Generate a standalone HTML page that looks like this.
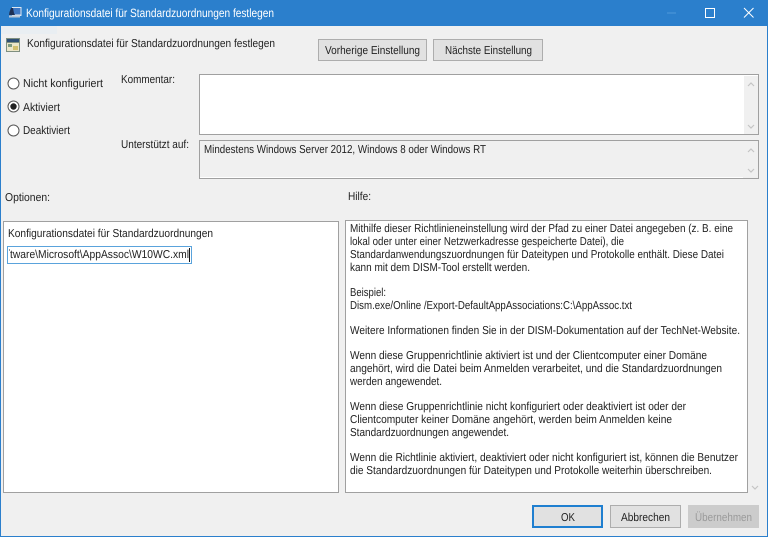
<!DOCTYPE html>
<html lang="de">
<head>
<meta charset="utf-8">
<title>Konfigurationsdatei für Standardzuordnungen festlegen</title>
<style>
html,body{margin:0;padding:0;width:768px;height:537px;overflow:hidden;background:#f0f0f0}
svg{display:block;position:absolute;left:0;top:0;filter:blur(.35px)}
text{font-family:"Liberation Sans",sans-serif;font-size:11.5px;fill:#222;text-rendering:geometricPrecision}
.t{fill:#fff;font-size:12px}
</style>
</head>
<body>
<svg width="768" height="537" viewBox="0 0 768 537" xmlns="http://www.w3.org/2000/svg">
<!-- window -->
<rect x="0" y="0" width="768" height="537" fill="#2b7fcc"/>
<rect x="1" y="26" width="766" height="510" fill="#f0f0f0"/>
<rect x="1" y="26" width="56" height="8" fill="#e9eef2"/>

<!-- title icon -->
<rect x="12" y="7" width="9.500" height="9" fill="#dfe8f2"/>
<rect x="13" y="8" width="7.500" height="6.500" fill="#3f78c4"/>
<path d="M11 8 L13 8 L14 13 L15 15 L9 15 L9.500 12 Z" fill="#1d2f55"/>
<rect x="9" y="15.500" width="11" height="2" fill="#b9c6d6"/>
<text class="t" x="26" y="17" textLength="248" lengthAdjust="spacingAndGlyphs">Konfigurationsdatei für Standardzuordnungen festlegen</text>

<!-- window controls -->
<rect x="667" y="12.500" width="9" height="1" fill="#4f98da"/>
<rect x="705.500" y="8.500" width="9" height="9" fill="none" stroke="#fff"/>
<path d="M744 8 L753.500 17.500 M753.500 8 L744 17.500" stroke="#fff" stroke-width="1" fill="none"/>

<!-- header -->
<rect x="6" y="38" width="14" height="14" fill="#7f8f80"/>
<rect x="7" y="39" width="12" height="3" fill="#2f4f73"/>
<rect x="7" y="43" width="12" height="8" fill="#ece6c8"/>
<rect x="8" y="44" width="4" height="3" fill="#7f9a7f"/>
<rect x="13" y="46" width="5" height="4" fill="#d2c070"/>
<text x="27" y="47" textLength="248" lengthAdjust="spacingAndGlyphs">Konfigurationsdatei für Standardzuordnungen festlegen</text>

<rect x="318.500" y="39.500" width="108" height="21" fill="#e1e1e1" stroke="#adadad"/>
<text x="325" y="54" textLength="95" lengthAdjust="spacingAndGlyphs">Vorherige Einstellung</text>
<rect x="433.500" y="39.500" width="109" height="21" fill="#e1e1e1" stroke="#adadad"/>
<text x="445" y="54" textLength="87" lengthAdjust="spacingAndGlyphs">Nächste Einstellung</text>

<!-- radios -->
<circle cx="13.500" cy="83.500" r="5.500" fill="#fff" stroke="#555"/>
<text x="23" y="87" textLength="80" lengthAdjust="spacingAndGlyphs">Nicht konfiguriert</text>
<circle cx="13.500" cy="106.500" r="5.500" fill="#fff" stroke="#555"/>
<circle cx="13.500" cy="106.500" r="3.200" fill="#222"/>
<text x="23" y="111" textLength="37" lengthAdjust="spacingAndGlyphs">Aktiviert</text>
<circle cx="13.500" cy="130.500" r="5.500" fill="#fff" stroke="#555"/>
<text x="23" y="134" textLength="47" lengthAdjust="spacingAndGlyphs">Deaktiviert</text>

<!-- Kommentar -->
<text x="121" y="83" textLength="54" lengthAdjust="spacingAndGlyphs">Kommentar:</text>
<rect x="199.500" y="74.500" width="559" height="60" fill="#fff" stroke="#a0a0a0"/>
<rect x="744" y="76" width="14" height="58" fill="#f0f0f0"/>
<path d="M748 86 L751 83 L754 86" fill="none" stroke="#c4c4c4" stroke-width="1.200"/>
<path d="M748 125 L751 128 L754 125" fill="none" stroke="#c4c4c4" stroke-width="1.200"/>

<!-- Unterstützt -->
<text x="121" y="148" textLength="68" lengthAdjust="spacingAndGlyphs">Unterstützt auf:</text>
<rect x="199.500" y="140.500" width="559" height="38" fill="#f0f0f0" stroke="#a0a0a0"/>
<rect x="200" y="177" width="543" height="1" fill="#fff"/>
<text x="204" y="153" textLength="282" lengthAdjust="spacingAndGlyphs">Mindestens Windows Server 2012, Windows 8 oder Windows RT</text>
<path d="M748 152 L751 149 L754 152" fill="none" stroke="#c4c4c4" stroke-width="1.200"/>
<path d="M748 169 L751 172 L754 169" fill="none" stroke="#c4c4c4" stroke-width="1.200"/>

<!-- section labels -->
<text x="5" y="201" textLength="45" lengthAdjust="spacingAndGlyphs">Optionen:</text>
<text x="348" y="200" textLength="23" lengthAdjust="spacingAndGlyphs">Hilfe:</text>

<!-- Options panel -->
<rect x="3.500" y="221.500" width="335" height="271" fill="#fff" stroke="#a0a0a0"/>
<text x="8" y="237" textLength="205" lengthAdjust="spacingAndGlyphs">Konfigurationsdatei für Standardzuordnungen</text>
<rect x="7.500" y="246.500" width="184" height="17" fill="#fff" stroke="#5aa3dc"/>
<rect x="9" y="249" width="1" height="2" fill="#999"/>
<text x="10" y="258" textLength="179" lengthAdjust="spacingAndGlyphs">tware\Microsoft\AppAssoc\W10WC.xml</text>
<rect x="189" y="248" width="1" height="14" fill="#111"/>

<!-- Help panel -->
<rect x="345.500" y="220.500" width="402" height="272" fill="#fff" stroke="#a0a0a0"/>
<text x="350" y="232" textLength="383" lengthAdjust="spacingAndGlyphs">Mithilfe dieser Richtlinieneinstellung wird der Pfad zu einer Datei angegeben (z. B. eine</text>
<text x="350" y="245" textLength="274" lengthAdjust="spacingAndGlyphs">lokal oder unter einer Netzwerkadresse gespeicherte Datei), die</text>
<text x="350" y="258" textLength="374" lengthAdjust="spacingAndGlyphs">Standardanwendungszuordnungen für Dateitypen und Protokolle enthält. Diese Datei</text>
<text x="350" y="271" textLength="180" lengthAdjust="spacingAndGlyphs">kann mit dem DISM-Tool erstellt werden.</text>
<text x="350" y="296" textLength="36" lengthAdjust="spacingAndGlyphs">Beispiel:</text>
<text x="350" y="309" textLength="282" lengthAdjust="spacingAndGlyphs">Dism.exe/Online /Export-DefaultAppAssociations:C:\AppAssoc.txt</text>
<text x="350" y="334" textLength="390" lengthAdjust="spacingAndGlyphs">Weitere Informationen finden Sie in der DISM-Dokumentation auf der TechNet-Website.</text>
<text x="350" y="359" textLength="357" lengthAdjust="spacingAndGlyphs">Wenn diese Gruppenrichtlinie aktiviert ist und der Clientcomputer einer Domäne</text>
<text x="350" y="372" textLength="372" lengthAdjust="spacingAndGlyphs">angehört, wird die Datei beim Anmelden verarbeitet, und die Standardzuordnungen</text>
<text x="350" y="385" textLength="92" lengthAdjust="spacingAndGlyphs">werden angewendet.</text>
<text x="350" y="410" textLength="336" lengthAdjust="spacingAndGlyphs">Wenn diese Gruppenrichtlinie nicht konfiguriert oder deaktiviert ist oder der</text>
<text x="350" y="423" textLength="322" lengthAdjust="spacingAndGlyphs">Clientcomputer keiner Domäne angehört, werden beim Anmelden keine</text>
<text x="350" y="436" textLength="159" lengthAdjust="spacingAndGlyphs">Standardzuordnungen angewendet.</text>
<text x="350" y="461" textLength="388" lengthAdjust="spacingAndGlyphs">Wenn die Richtlinie aktiviert, deaktiviert oder nicht konfiguriert ist, können die Benutzer</text>
<text x="350" y="474" textLength="362" lengthAdjust="spacingAndGlyphs">die Standardzuordnungen für Dateitypen und Protokolle weiterhin überschreiben.</text>
<path d="M752 486 L755 489 L758 486" fill="none" stroke="#c4c4c4" stroke-width="1.200"/>

<!-- footer buttons -->
<rect x="533" y="506" width="69" height="21" fill="#e1e1e1" stroke="#1f7fd0" stroke-width="2"/>
<text x="561" y="521" textLength="14" lengthAdjust="spacingAndGlyphs">OK</text>
<rect x="610.500" y="505.500" width="70" height="22" fill="#e1e1e1" stroke="#adadad"/>
<text x="621" y="521" textLength="49" lengthAdjust="spacingAndGlyphs">Abbrechen</text>
<rect x="688" y="505" width="71" height="23" fill="#cccccc"/>
<text x="695" y="521" textLength="57" lengthAdjust="spacingAndGlyphs" style="fill:#9a9a9a">Übernehmen</text>
</svg>
</body>
</html>
